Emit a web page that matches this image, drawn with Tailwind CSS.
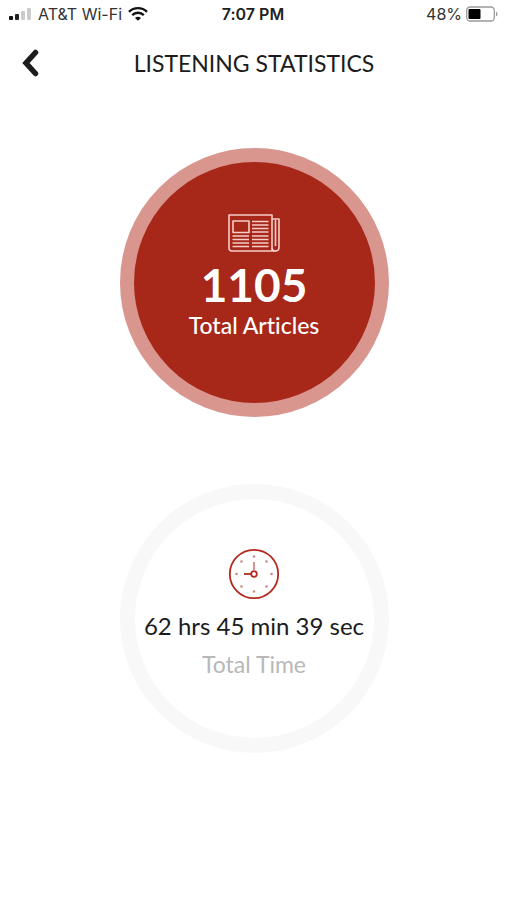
<!DOCTYPE html>
<html lang="en">
<head>
<meta charset="utf-8">
<meta name="viewport" content="width=device-width, initial-scale=1">
<title>Listening Statistics</title>
<script src="https://cdn.jsdelivr.net/npm/@tailwindcss/browser@4"></script>
</head>
<body class="min-h-screen bg-white font-['Lato',sans-serif] text-[#1c1c1c] [font-variant-ligatures:none]">
<div class="grid h-7 grid-cols-[1fr_auto_1fr] items-center px-2 font-['Inter',sans-serif] text-base leading-7 text-[#333]">
  <div class="flex items-center gap-1.5">
    <svg class="h-3.5 w-6" viewBox="0 0 24 14" aria-label="Signal">
      <rect x="1" y="9" width="4" height="4" rx="1" fill="#111"/>
      <rect x="7" y="7" width="4" height="6" rx="1" fill="#222"/>
      <rect x="13" y="4" width="4" height="9" rx="1" fill="#ccc"/>
      <rect x="19" y="1" width="4" height="12" rx="1" fill="#ccc"/>
    </svg>
    <span>AT&amp;T Wi-Fi</span>
    <svg class="h-4 w-5" viewBox="0 0 20 16" fill="none" stroke="#111" stroke-width="2.4" aria-label="Wi-Fi">
      <path d="M1 5.8C6 .9 14 .9 19 5.8M4.2 9.2c3.300-3.200 8.300-3.200 11.600 0"/>
      <path d="M10 14.800 7 11.900c1.700-1.500 4.300-1.500 6 0z" fill="#111" stroke="none"/>
    </svg>
  </div>
  <span class="font-semibold text-[#222]">7:07 PM</span>
  <div class="flex items-center justify-end gap-1">
    <span>48%</span>
    <svg class="h-4 w-8" viewBox="0 0 32 16" aria-label="Battery">
      <rect x=".7" y="1" width="27.600" height="14" rx="3.500" fill="none" stroke="#999" stroke-width="1.300"/>
      <rect x="2.500" y="3" width="12" height="10" rx="1" fill="#000"/>
      <path d="M30 5.500c2 1 2 4 0 5z" fill="#999"/>
    </svg>
  </div>
</div>
<header class="grid h-[70px] grid-cols-[1fr_auto_1fr] items-center pl-0.5">
  <button type="button" aria-label="Back" class="ml-3.5 flex h-10 w-7 items-center justify-center">
    <svg class="h-7 w-5" viewBox="0 0 20 28" fill="none" stroke="#1c1c1c" stroke-width="5.500" stroke-linecap="round" stroke-linejoin="miter"><path d="M15.500 3.500 6 14l9.500 10.500"/></svg>
  </button>
  <h1 class="text-[23px] leading-7">LISTENING STATISTICS</h1>
</header>
<main class="flex flex-col items-center gap-[67px] pt-[50px] pl-0.5">
  <section class="flex size-[269px] flex-col items-center rounded-full border-[14px] border-[#d9968f] bg-[#a72719] pt-[51px] text-white">
    <svg class="h-10 w-[52px]" viewBox="0 0 52 40" fill="none" stroke="#f6cdc8" stroke-width="1.600" stroke-linejoin="round" aria-hidden="true">
      <path d="M1 2h43v33a3 3 0 0 0 3 3H4a3 3 0 0 1-3-3z"/>
      <path d="M44 6h7v29a3.500 3 0 0 1-7 0M47.500 7v26"/>
      <rect x="5" y="8" width="16" height="11.500"/>
      <path d="M24 8.500h16.500M24 12h16.500M24 15.500h16.500M24 19h16.500M4.500 23h16.500M24 23h16.500M4.500 26.500h16.500M24 26.500h16.500M4.500 30h16.500M24 30h16.500M4.500 33.500h16.500M24 33.500h16.500"/>
    </svg>
    <p class="mt-2 text-[46px] leading-12 font-bold">1105</p>
    <p class="mt-0.5 text-[23px] leading-7 font-medium">Total Articles</p>
  </section>
  <section class="flex size-[269px] flex-col items-center rounded-full border-[15px] border-[#f8f8f8] bg-white pt-[49px] whitespace-nowrap">
    <svg class="size-[52px]" viewBox="0 0 52 52" fill="none" stroke="#b5291f" stroke-width="1.800" aria-hidden="true">
      <circle cx="26" cy="26" r="24.200"/>
      <circle cx="26" cy="26" r="2.800"/>
      <path d="M16 26h7"/>
      <path d="M26 14v9" stroke="#cf8a86"/>
      <g fill="#cf8a86" stroke="none"><circle cx="26" cy="8.500" r="1.300"/><circle cx="38.500" cy="13.500" r="1.300"/><circle cx="43.500" cy="26" r="1.300"/><circle cx="38.500" cy="38.500" r="1.300"/><circle cx="26" cy="43.500" r="1.300"/><circle cx="13.500" cy="38.500" r="1.300"/><circle cx="8.500" cy="26" r="1.300"/><circle cx="13.500" cy="13.500" r="1.300"/></g>
    </svg>
    <p class="mt-3 text-2xl leading-7">62 hrs 45 min 39 sec</p>
    <p class="mt-2.5 text-[23px] leading-7 text-[#b8b8b8]">Total Time</p>
  </section>
</main>
</body>
</html>
